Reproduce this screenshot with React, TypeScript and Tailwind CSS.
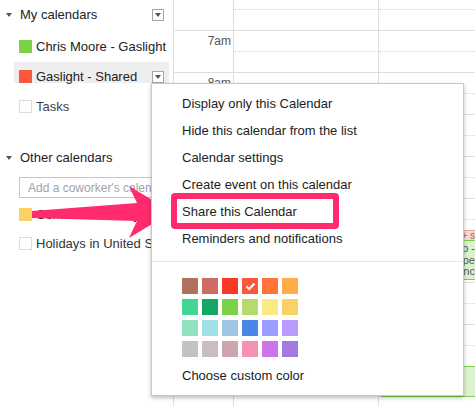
import React from 'react';

const swatches = [
  ['bg-[#ac725e]', 'bg-[#d06b64]', 'bg-[#f83a22]', 'bg-[#fa573c]', 'bg-[#ff7537]', 'bg-[#ffad46]'],
  ['bg-[#42d692]', 'bg-[#16a765]', 'bg-[#7bd148]', 'bg-[#b3dc6c]', 'bg-[#fbe983]', 'bg-[#fad165]'],
  ['bg-[#92e1c0]', 'bg-[#9fe1e7]', 'bg-[#9fc6e7]', 'bg-[#4986e7]', 'bg-[#9a9cff]', 'bg-[#b99aff]'],
  ['bg-[#c2c2c2]', 'bg-[#cabdbf]', 'bg-[#cca6ac]', 'bg-[#f691b2]', 'bg-[#cd74e6]', 'bg-[#a47ae2]'],
];

const menuItems = [
  'Display only this Calendar',
  'Hide this calendar from the list',
  'Calendar settings',
  'Create event on this calendar',
  'Share this Calendar',
  'Reminders and notifications',
];

// only the labels not hidden under the menu
const hours = ['', '7am', '8am', '', '', '', '', '', '', ''];

const Caret = () => (
  <div className="w-0 h-0 border-x-[3px] border-x-transparent border-t-[4px] border-t-[#555]"></div>
);

const DropBox = () => (
  <div className="w-[12px] h-[12px] border border-[#a6a6a6] bg-white flex items-center justify-center">
    <div className="w-0 h-0 border-x-[3px] border-x-transparent border-t-[4px] border-t-[#555]"></div>
  </div>
);

const DayColumn = ({ last }: { last?: boolean }) => (
  <div className={last ? 'flex-1 flex flex-col -mt-[12px]' : 'w-[145px] border-r border-[#ddd] flex flex-col -mt-[12px]'}>
    {hours.map((h, i) => (
      <div key={i} className="h-[42px] shrink-0 border-t border-[#ddd]">
        <div className="h-[21px] border-b border-dotted border-[#d4d4d4]"></div>
      </div>
    ))}
  </div>
);

const App: React.FC = () => {
  return (
    <div className="w-[475px] h-[406px] relative overflow-hidden bg-white flex font-['Liberation_Sans',Arial,sans-serif] text-[13px] text-[#222]">
      {/* Sidebar */}
      <div className="w-[173px] shrink-0 flex flex-col overflow-hidden">
        <div className="h-[30px] flex items-center pl-[6px] pr-[9px]">
          <Caret />
          <span className="ml-[8px] flex-1">My calendars</span>
          <DropBox />
        </div>

        <div className="mt-[6px] h-[21px] ml-[14px] w-[155px] pl-[5px] flex items-center">
          <div className="w-[13px] h-[13px] bg-[#7bd148]"></div>
          <span className="ml-[4px] whitespace-nowrap">Chris Moore - Gaslight</span>
        </div>

        <div className="mt-[5px] h-[21px] ml-[14px] w-[155px] pl-[5px] pr-[5px] flex items-end bg-[#eee]">
          <div className="w-[13px] h-[13px] bg-[#fa573c]"></div>
          <span className="ml-[4px] flex-1 leading-[13px] whitespace-nowrap">Gaslight - Shared</span>
          <DropBox />
        </div>

        <div className="mt-[13px] h-[21px] ml-[14px] pl-[5px] flex items-center">
          <div className="w-[13px] h-[13px] border border-[#ddd]"></div>
          <span className="ml-[4px] text-[#444]">Tasks</span>
        </div>

        <div className="mt-[26px] h-[30px] flex items-center pl-[6px]">
          <Caret />
          <span className="ml-[8px]">Other calendars</span>
        </div>

        <div className="mt-[4px] ml-[19px] w-[150px] h-[21px] border border-[#c6c6c6] flex items-center pl-[8px] text-[12px] text-[#a3a3a3] whitespace-nowrap overflow-hidden">
          Add a coworker's calendar
        </div>

        <div className="mt-[6px] h-[21px] ml-[19px] w-[150px] flex items-center whitespace-nowrap overflow-hidden">
          <div className="w-[13px] h-[13px] bg-[#fad165] shrink-0"></div>
          <span className="ml-[4px]">Contacts' birthdays and events</span>
        </div>

        <div className="mt-[8px] h-[21px] ml-[19px] w-[150px] flex items-center whitespace-nowrap overflow-hidden">
          <div className="w-[13px] h-[13px] border border-[#ddd] shrink-0"></div>
          <span className="ml-[4px] text-[#333]">Holidays in United States</span>
        </div>
      </div>

      {/* Calendar grid */}
      <div className="flex-1 flex border-l border-[#ddd]">
        <div className="w-[60px] shrink-0 border-r border-[#ddd] flex flex-col -mt-[12px]">
          {hours.map((h, i) => (
            <div key={i} className="h-[42px] shrink-0 border-t border-[#ddd] text-right pr-[2px] pt-[1px] text-[12px] text-[#555]">
              {h}
            </div>
          ))}
        </div>
        <DayColumn />
        <div className="flex-1 relative flex">
          <DayColumn last />
          <div className="absolute left-[2px] right-0 top-[230px] h-[10px] bg-[#fbd6d1] border-t border-[#f3a199] text-[10px] leading-[9px] text-[#777] overflow-hidden whitespace-nowrap text-right">
            Lunch + s
          </div>
          <div className="absolute left-[2px] right-0 top-[240px] h-[40px] bg-[#dcf2cf] border-y border-[#7bd148] text-[11px] leading-[11.5px] text-[#555] overflow-hidden whitespace-nowrap pt-[2px] text-right">
            <div>Standup -</div>
            <div>Scope</div>
            <div>Sync</div>
          </div>
          <div className="absolute left-[2px] right-0 top-[366px] h-[31px] bg-[#dcf2cf] border-y border-[#7bd148]"></div>
        </div>
      </div>

      {/* Arrow */}
      <svg className="absolute left-0 top-0 pointer-events-none" width="475" height="406" viewBox="0 0 475 406">
        <path d="M32 211 L137 203 L129 186 L172 212 L129 238 L137 221 L32 218 Z" fill="#ff2b6c" />
      </svg>

      {/* Context menu */}
      <div className="absolute left-[151px] top-[83px] w-[313px] h-[313px] bg-white border border-[#c8c8c8] shadow-[0_2px_4px_rgba(0,0,0,0.25)] pt-[6px] flex flex-col">
        {menuItems.map((item) => (
          <div key={item} className="relative h-[27px] flex items-center pl-[30px] whitespace-nowrap">
            {item === 'Share this Calendar' && (
              <div className="absolute left-[19px] top-[-5px] w-[168px] h-[36px] border-[6px] border-[#ff2b6c] rounded-[4px]"></div>
            )}
            <span className="relative">{item}</span>
          </div>
        ))}
        <div className="mt-[9px] border-t border-[#e5e5e5]"></div>
        <div className="pt-[16px] pl-[30px] flex flex-col gap-[5px]">
          {swatches.map((row, r) => (
            <div key={r} className="flex gap-[4px]">
              {row.map((c, i) => (
                <div key={i} className={`w-[16px] h-[16px] flex items-center justify-center ${c}`}>
                  {r === 0 && i === 3 && (
                    <svg width="11" height="9" viewBox="0 0 11 9">
                      <path d="M1.5 4.5 L4.2 7 L9.5 1.5" stroke="#fff" strokeWidth="2" fill="none" />
                    </svg>
                  )}
                </div>
              ))}
            </div>
          ))}
        </div>
        <div className="mt-[11px] pl-[30px] leading-[16px]">Choose custom color</div>
      </div>
    </div>
  );
};

export default App;
